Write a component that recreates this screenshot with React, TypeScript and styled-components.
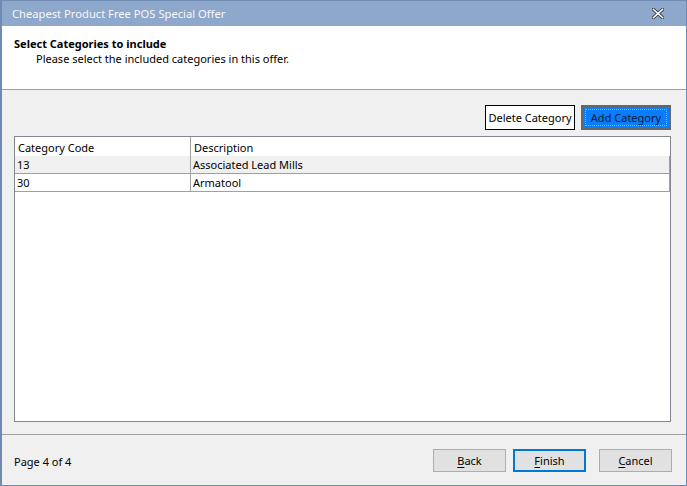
import styled, { createGlobalStyle } from 'styled-components';

const GlobalStyle = createGlobalStyle`
  html, body {
    margin: 0;
    padding: 0;
    background: #f0f0f0;
  }
  * {
    box-sizing: border-box;
  }
`;

const fontStack = `"Noto Sans", "Open Sans", sans-serif`;

const Window = styled.div`
  width: 687px;
  height: 486px;
  display: flex;
  flex-direction: column;
  border: 1px solid #6f8bb3;
  border-left-width: 2px;
  font-family: ${fontStack};
  font-size: 11px;
  color: #000;
  background: #f0f0f0;
`;

const TitleBar = styled.div`
  height: 25px;
  flex: none;
  display: flex;
  align-items: center;
  justify-content: space-between;
  padding: 0 22px 0 10px;
  background: #8ea8cc;
  color: #f5f7fa;
  font-size: 11.2px;
`;

const CloseIcon = styled.svg`
  width: 12px;
  height: 11px;
  display: block;
`;

const Header = styled.div`
  height: 64px;
  flex: none;
  padding: 10px 12px 0;
  background: #fff;
  border-bottom: 1px solid #a0a0a0;
  line-height: 15px;
`;

const HeaderTitle = styled.div`
  font-weight: 700;
`;

const HeaderText = styled.div`
  padding-left: 22px;
`;

const Content = styled.div`
  flex: 1;
  display: flex;
  flex-direction: column;
  gap: 6px;
  padding: 15px 15px 12px 12px;
  border-bottom: 1px solid #a0a0a0;
`;

const Toolbar = styled.div`
  display: flex;
  justify-content: flex-end;
  gap: 6px;
`;

const ToolButton = styled.button<{ $primary?: boolean }>`
  position: relative;
  height: 25px;
  width: 90px;
  padding: 0;
  white-space: nowrap;
  font-family: ${fontStack};
  font-size: 11px;
  color: ${({ $primary }) => ($primary ? '#0a1a3a' : '#000')};
  background: ${({ $primary }) => ($primary ? '#0a7dfb' : '#fff')};
  border: ${({ $primary }) => ($primary ? '2px solid #676767' : '1px solid #000')};

  ${({ $primary }) =>
    $primary &&
    `
    &::after {
      content: '';
      position: absolute;
      inset: 2px;
      border: 1px dotted #f0a040;
    }
  `}
`;

const Grid = styled.div`
  flex: 1;
  background: #fff;
  border: 1px solid #828790;
`;

const Row = styled.div<{ $shaded?: boolean; $header?: boolean }>`
  display: grid;
  grid-template-columns: 175px 1fr;
  height: ${({ $header }) => ($header ? '19px' : '18px')};
  background: ${({ $shaded }) => ($shaded ? '#f0f0f0' : '#fff')};
  border-bottom: ${({ $header }) => ($header ? 'none' : '1px solid #a0a0a0')};
  border-right: ${({ $header }) => ($header ? 'none' : '1px solid #a0a0a0')};
  line-height: 17px;
`;

const Cell = styled.div<{ $header?: boolean }>`
  padding-left: ${({ $header }) => ($header ? '3px' : '2px')};
  padding-top: ${({ $header }) => ($header ? '2px' : '0')};
  white-space: nowrap;
  overflow: hidden;

  & + & {
    border-left: 1px solid #a0a0a0;
  }
`;

const Footer = styled.div`
  height: 50px;
  flex: none;
  display: flex;
  align-items: center;
  justify-content: space-between;
  padding: 0 14px 0 12px;
`;

const PageLabel = styled.span`
  padding-top: 3px;
`;

const FooterButtons = styled.div`
  display: flex;
  gap: 7px;

  & > :last-child {
    margin-left: 6px;
  }
`;

const DialogButton = styled.button<{ $default?: boolean }>`
  width: 73px;
  height: 23px;
  padding: 0;
  font-family: ${fontStack};
  font-size: 11px;
  color: #000;
  background: #e1e1e1;
  border: ${({ $default }) => ($default ? '2px solid #0078d7' : '1px solid #adadad')};

  u {
    text-decoration-thickness: 1px;
    text-underline-offset: 2px;
  }
`;

const rows = [
  { code: '13', description: 'Associated Lead Mills' },
  { code: '30', description: 'Armatool' },
];

export default function App() {
  return (
    <>
      <GlobalStyle />
      <Window>
        <TitleBar>
          <span>Cheapest Product Free POS Special Offer</span>
          <CloseIcon viewBox="0 0 12 11">
            <path d="M1.5 1.5 L10.5 9.5 M10.5 1.5 L1.5 9.5" stroke="#2b3445" strokeWidth="3.2" strokeLinecap="square" />
            <path d="M1.5 1.5 L10.5 9.5 M10.5 1.5 L1.5 9.5" stroke="#ffffff" strokeWidth="1.6" strokeLinecap="square" />
          </CloseIcon>
        </TitleBar>
        <Header>
          <HeaderTitle>Select Categories to include</HeaderTitle>
          <HeaderText>Please select the included categories in this offer.</HeaderText>
        </Header>
        <Content>
          <Toolbar>
            <ToolButton>Delete Category</ToolButton>
            <ToolButton $primary>Add Category</ToolButton>
          </Toolbar>
          <Grid>
            <Row $header>
              <Cell $header>Category Code</Cell>
              <Cell $header>Description</Cell>
            </Row>
            {rows.map((row, i) => (
              <Row key={row.code} $shaded={i === 0}>
                <Cell>{row.code}</Cell>
                <Cell>{row.description}</Cell>
              </Row>
            ))}
          </Grid>
        </Content>
        <Footer>
          <PageLabel>Page 4 of 4</PageLabel>
          <FooterButtons>
            <DialogButton>
              <u>B</u>ack
            </DialogButton>
            <DialogButton $default>
              <u>F</u>inish
            </DialogButton>
            <DialogButton>
              <u>C</u>ancel
            </DialogButton>
          </FooterButtons>
        </Footer>
      </Window>
    </>
  );
}
